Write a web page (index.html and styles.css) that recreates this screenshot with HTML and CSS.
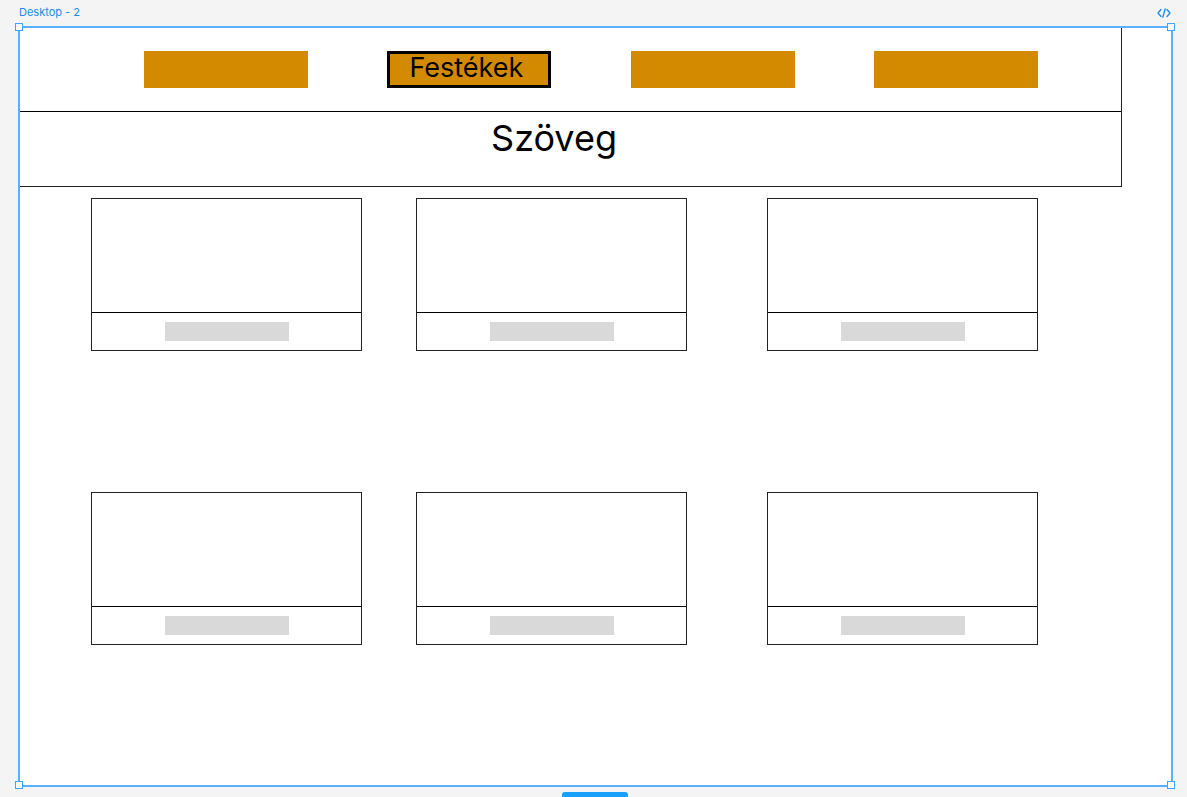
FILE: index.html
```html
<!DOCTYPE html>
<html lang="hu">
<head>
<meta charset="utf-8">
<title>Desktop - 2</title>
<link rel="stylesheet" href="styles.css">
</head>
<body>
<div class="canvas">
  <div class="frame-bar">
    <span class="frame-name">Desktop - 2</span>
    <svg class="code-icon" width="14" height="10" viewBox="0 0 14 10" aria-hidden="true">
      <polyline points="4,1.5 1,5 4,8.5" />
      <polyline points="10,1.5 13,5 10,8.5" />
      <line x1="8.2" y1="0.8" x2="5.8" y2="9.2" />
    </svg>
  </div>
  <div class="frame">
    <header class="hero">
      <nav class="nav">
        <a class="nav-btn"></a>
        <a class="nav-btn active">Festékek</a>
        <a class="nav-btn"></a>
        <a class="nav-btn"></a>
      </nav>
      <div class="hero-title">Szöveg</div>
    </header>
    <section class="grid">
      <div class="card"><div class="card-media"></div><div class="card-foot"><span class="card-label"></span></div></div>
      <div class="card"><div class="card-media"></div><div class="card-foot"><span class="card-label"></span></div></div>
      <div class="card"><div class="card-media"></div><div class="card-foot"><span class="card-label"></span></div></div>
      <div class="card"><div class="card-media"></div><div class="card-foot"><span class="card-label"></span></div></div>
      <div class="card"><div class="card-media"></div><div class="card-foot"><span class="card-label"></span></div></div>
      <div class="card"><div class="card-media"></div><div class="card-foot"><span class="card-label"></span></div></div>
    </section>
    <div class="selection">
      <span class="handle tl"></span>
      <span class="handle tr"></span>
      <span class="handle bl"></span>
      <span class="handle br"></span>
    </div>
  </div>
  <div class="tab"></div>
</div>
</body>
</html>
```

FILE: styles.css
```css
* { box-sizing: border-box; }
html, body { margin: 0; padding: 0; }
body {
  background: #f4f4f4;
  font-family: Inter, "Noto Sans", sans-serif;
  width: 1187px;
  height: 797px;
  overflow: hidden;
}
.canvas {
  padding-left: 19px;
}
.frame-bar {
  width: 1153px;
  height: 27px;
  padding-top: 6px;
  padding-right: 1px;
  display: flex;
  justify-content: space-between;
  align-items: flex-start;
}
.frame-name {
  font-size: 11px;
  line-height: 13px;
  color: #1b8cec;
}
.code-icon {
  margin-top: 2px;
  fill: none;
  stroke: #1b8cec;
  stroke-width: 1.3;
  stroke-linecap: round;
  stroke-linejoin: round;
}
.frame {
  position: relative;
  width: 1153px;
  height: 759px;
  background: #ffffff;
}
.hero {
  width: 1103px;
  border: 1px solid #222;
}
.nav {
  height: 84px;
  border-bottom: 1px solid #000;
  display: flex;
  align-items: center;
  gap: 79.4px;
  padding-left: 124px;
}
.nav-btn {
  display: block;
  width: 164px;
  height: 37px;
  background: #d48a00;
}
.nav-btn.active {
  border: 3px solid #000;
  padding: 0 6px 4px 0;
  font-size: 27px;
  line-height: 27px;
  color: #000;
  text-align: center;
}
.hero-title {
  height: 74px;
  padding: 4px 33px 0 0;
  font-size: 36px;
  line-height: 44px;
  text-align: center;
  color: #000;
}
.grid {
  margin: 11px 0 0 72px;
  display: grid;
  grid-template-columns: 325px 351px 271px;
  row-gap: 141px;
}
.card {
  width: 271px;
  height: 153px;
  border: 1px solid #222;
}
.card-media {
  height: 114px;
  border-bottom: 1px solid #000;
}
.card-foot {
  height: 37px;
  display: flex;
  align-items: center;
  justify-content: center;
}
.card-label {
  display: block;
  width: 124px;
  height: 19px;
  background: #d9d9d9;
}
.selection {
  position: absolute;
  inset: -1px;
  border: 2px solid #5aafff;
  pointer-events: none;
}
.handle {
  position: absolute;
  width: 8px;
  height: 8px;
  background: #fff;
  border: 1.5px solid #3da5ff;
}
.handle.tl { left: -5px; top: -5px; }
.handle.tr { right: -3.5px; top: -5px; }
.handle.bl { left: -5px; bottom: -4px; }
.handle.br { right: -3.5px; bottom: -4px; }
.tab {
  margin: 6px 0 0 543px;
  width: 66px;
  height: 6px;
  background: #18a0fb;
  border-radius: 3px 3px 0 0;
}
```
